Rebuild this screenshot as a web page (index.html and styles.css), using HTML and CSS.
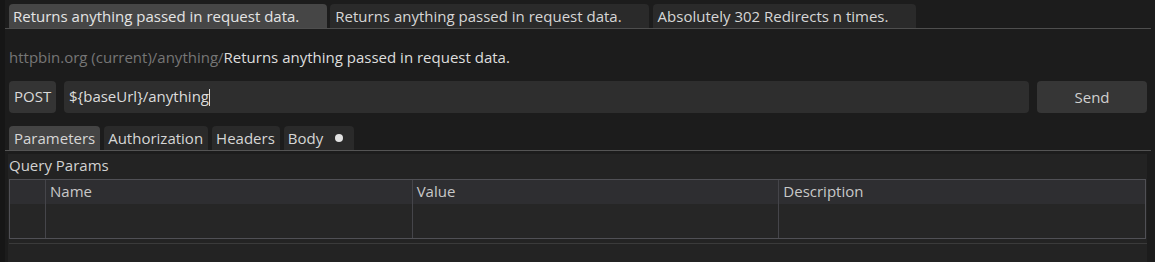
FILE: index.html
```html
<!DOCTYPE html>
<html>
<head>
<meta charset="utf-8">
<link rel="stylesheet" href="styles.css">
</head>
<body>
<div class="app">
  <div class="tabs">
    <div class="tab active">Returns anything passed in request data.</div>
    <div class="tab">Returns anything passed in request data.</div>
    <div class="tab">Absolutely 302 Redirects n times.</div>
  </div>
  <div class="crumb"><span class="crumb-path">httpbin.org (current)/anything/</span><span class="crumb-name">Returns anything passed in request data.</span></div>
  <div class="urlrow">
    <div class="method">POST</div>
    <div class="url">${baseUrl}/anything<span class="caret"></span></div>
    <div class="send">Send</div>
  </div>
  <div class="subtabs">
    <div class="subtab active">Parameters</div>
    <div class="subtab">Authorization</div>
    <div class="subtab">Headers</div>
    <div class="subtab">Body <span class="dot"></span></div>
  </div>
  <div class="panel">
    <div class="panel-title">Query Params</div>
    <div class="table">
      <div class="th"></div>
      <div class="th">Name</div>
      <div class="th">Value</div>
      <div class="th">Description</div>
      <div class="td"></div>
      <div class="td"></div>
      <div class="td"></div>
      <div class="td"></div>
    </div>
    <div class="panel-sep"></div>
  </div>
</div>
</body>
</html>
```

FILE: styles.css
```css
html, body {
  margin: 0;
  padding: 0;
  background: #1c1c1c;
  height: 262px;
  overflow: hidden;
}
.app {
  font-family: "Open Sans", "Noto Sans", sans-serif;
  font-size: 15px;
  color: #dcdcdc;
  border-left: 5px solid #161616;
  height: 262px;
  box-sizing: border-box;
  padding-right: 4px;
}
.tabs {
  display: flex;
  gap: 3px;
  padding: 4px 0 0 4px;
  border-bottom: 1px solid #4e4e4e;
  height: 24px;
}
.tab {
  background: #2a2a2a;
  border-radius: 4px 4px 0 0;
  padding: 0 27px 0 5px;
  line-height: 24px;
  height: 24px;
  color: #d6d6d6;
  white-space: nowrap;
}
.tab.active {
  background: #464646;
  padding: 0 28px 0 4px;
  color: #e4e4e4;
}
.tab + .tab + .tab { margin-left: 1px; padding-right: 28px; }
.crumb {
  padding: 19px 0 0 4px;
  line-height: 18px;
  height: 18px;
  white-space: nowrap;
}
.crumb-path { color: #767676; }
.crumb-name { color: #dedede; }
.urlrow {
  display: flex;
  gap: 8px;
  margin-top: 15px;
  padding-left: 4px;
  margin-right: 4px;
  height: 32px;
}
.method {
  background: #343434;
  border-radius: 4px;
  width: 47px;
  box-sizing: border-box;
  padding-left: 5px;
  line-height: 31px;
  color: #dadada;
}
.url {
  flex: 1;
  background: #2e2e2e;
  border-radius: 4px;
  padding-left: 5px;
  line-height: 31px;
  color: #dcdcdc;
}
.caret {
  display: inline-block;
  width: 1px;
  height: 17px;
  background: #dcdcdc;
  vertical-align: -4px;
}
.send {
  width: 110px;
  background: #363636;
  border-radius: 4px;
  text-align: center;
  line-height: 32px;
  color: #d0d0d0;
}
.subtabs {
  display: flex;
  gap: 4px;
  margin-top: 13px;
  padding-left: 4px;
  height: 24px;
  border-bottom: 1px solid #545454;
}
.subtab {
  background: #2a2a2a;
  border-radius: 4px 4px 0 0;
  padding: 0 5px 0 4px;
  line-height: 24px;
  color: #d6d6d6;
  white-space: nowrap;
}
.subtab.active {
  background: #444444;
  padding: 0 5px 0 5px;
}
.subtab:last-child { padding-right: 11px; }
.dot {
  display: inline-block;
  width: 8px;
  height: 8px;
  border-radius: 50%;
  background: #e2e2e2;
  margin-left: 8px;
  vertical-align: 2px;
}
.panel {
  margin: 3px 4px 0 3px;
  background: #232323;
  height: 120px;
}
.panel-title {
  padding-left: 1px;
  line-height: 18px;
  padding-top: 2px;
  height: 23px;
  color: #d2d2d2;
}
.table {
  display: grid;
  grid-template-columns: 35px 1fr 1fr 1fr;
  grid-template-rows: 24px 34px;
  margin-left: 1px;
  margin-right: 1px;
  border: 1px solid #505055;
}
.th {
  background: #2e2e31;
  color: #c8c8c8;
  line-height: 23px;
  padding-left: 4px;
  border-left: 1px solid #45454a;
}
.td {
  background: #262626;
  border-left: 1px solid #45454a;
}
.th:nth-child(1), .td:nth-child(5) { border-left: none; }
.panel-sep {
  margin-top: 4px;
  height: 1px;
  background: #3a3a3a;
  margin-left: 1px;
}
```
